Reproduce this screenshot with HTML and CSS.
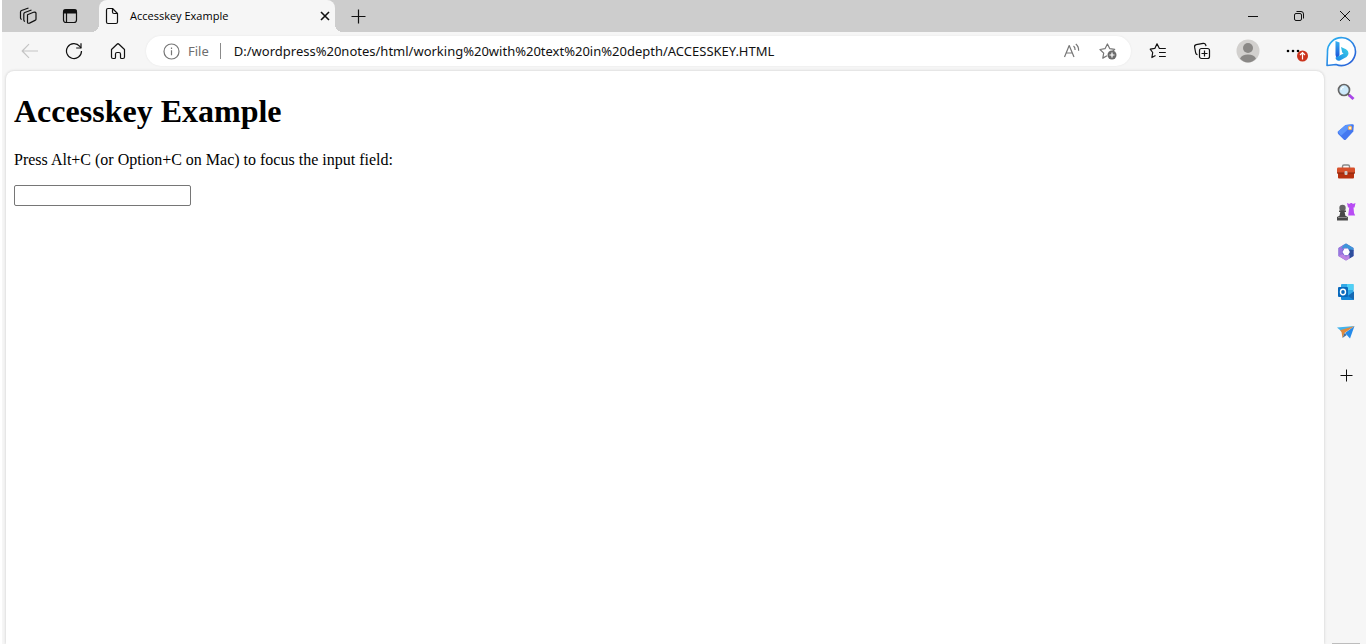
FILE: index.html
```html
<!DOCTYPE html>
<html lang="en">
<head>
  <meta charset="UTF-8">
  <meta name="viewport" content="width=device-width, initial-scale=1.0">
  <title>Accesskey Example</title>
  <link rel="stylesheet" href="styles.css">
</head>
<body>
  <header class="titlebar">
    <button class="title-btn" aria-label="Workspaces">
      <svg width="18" height="18" viewBox="0 0 18 18" class="line"><path d="M8.500 7.700l6-2.500q2-.6 2.500.8v6.200q0 .8-1 1.200l-5.500 2.700q-1.900.6-2-.9z"/><path d="M6 14.500q-1.200-.4-1.200-1.400V7q0-1 1-1.500L12.500 3"/><path d="M2.700 12.500q-1.200-.4-1.200-1.400V5q0-1 1-1.500L9.500 1"/></svg>
    </button>
    <button class="title-btn" aria-label="Tab actions">
      <svg width="16" height="16" viewBox="0 0 16 16" class="line"><rect x="1.500" y="1.500" width="13" height="13" rx="2.500"/><path d="M4.500 4v10" /><path d="M2 2h12v3H2z" fill="#111"/></svg>
    </button>
    <div class="tab">
      <svg width="14" height="18" viewBox="0 0 14 18" class="line"><path d="M3 1.500h4.500l5 5V15q0 1.500-1.500 1.500H3q-1.500 0-1.500-1.500V3Q1.500 1.500 3 1.500z"/><path d="M7.500 1.500V5q0 1.500 1.500 1.500h3.500"/></svg>
      <span class="tab-title">Accesskey Example</span>
      <button class="tab-close" aria-label="Close tab">
        <svg width="10" height="10" viewBox="0 0 10 10" class="line bold"><path d="M1 1l8 8M9 1L1 9"/></svg>
      </button>
    </div>
    <button class="title-btn" aria-label="New tab">
      <svg width="15" height="15" viewBox="0 0 15 15" class="line"><path d="M7.500.5v14M.5 7.500h14"/></svg>
    </button>
    <div class="window-controls">
      <button class="title-btn" aria-label="Minimize">
        <svg width="10" height="10" viewBox="0 0 10 10" class="line thin"><path d="M0 5.500h10"/></svg>
      </button>
      <button class="title-btn" aria-label="Restore">
        <svg width="10" height="10" viewBox="0 0 10 10" class="line thin"><rect x=".5" y="2.500" width="7" height="7" rx="1.500"/><path d="M2.500.5h4.500q2.500 0 2.500 2.500v4.500"/></svg>
      </button>
      <button class="title-btn" aria-label="Close">
        <svg width="10" height="10" viewBox="0 0 10 10" class="line thin"><path d="M0 0l10 10M10 0L0 10"/></svg>
      </button>
    </div>
  </header>

  <nav class="toolbar">
    <button class="tool-btn" aria-label="Back" disabled>
      <svg width="18" height="16" viewBox="0 0 18 16" class="line faded"><path d="M17 8H1.500M8 1.200L1.200 8 8 14.800"/></svg>
    </button>
    <button class="tool-btn" aria-label="Refresh">
      <svg width="18" height="18" viewBox="0 0 18 18" class="line"><path d="M16.500 9A7.500 7.500 0 1 1 14.800 4.300L16 6"/><path d="M16 1.200V6h-4.800"/></svg>
    </button>
    <button class="tool-btn" aria-label="Home">
      <svg width="16" height="18" viewBox="0 0 16 18" class="line"><path d="M1.500 7.500L7 2.200q1-.9 2 0l5.500 5.300V15q0 1.500-1.500 1.500h-1.500q-1 0-1-1V12q0-1.500-1.500-1.500H7q-1.500 0-1.500 1.500v3.500q0 1-1 1H3q-1.500 0-1.500-1.500z"/></svg>
    </button>

    <div class="address-bar">
      <button class="site-info">
        <svg width="17" height="17" viewBox="0 0 17 17" class="line gray"><circle cx="8.500" cy="8.500" r="7.500"/><path d="M8.500 7.300v5M8.500 4.500v1.400"/></svg>
        File
      </button>
      <input class="url" type="text" aria-label="Address" value="D:/wordpress%20notes/html/working%20with%20text%20in%20depth/ACCESSKEY.HTML">
      <button class="bar-btn" aria-label="Read aloud">
        <svg width="18" height="16" viewBox="0 0 18 16" class="line gray"><path d="M1.500 14L6.200 2.500 11 14M3.200 10h6"/><path d="M10.500 3q1.700 1.200 1.600 4M12.800 1q3 2.400 2.800 6.700"/></svg>
      </button>
      <button class="bar-btn" aria-label="Add to favorites">
        <svg width="18" height="18" viewBox="0 0 18 18" class="line gray"><path d="M8 13.800l-4.200 2.300.9-5L1 7.500l5-.8L8.400 2l2.300 4.600 5 .8-2 1.900"/><circle cx="13" cy="13" r="4.500" fill="#6b6b6b" stroke="none"/><path d="M13 10.500v5M10.500 13h5" stroke="#fff"/></svg>
      </button>
    </div>

    <button class="tool-btn" aria-label="Favorites">
      <svg width="18" height="18" viewBox="0 0 18 18" class="line"><path d="M6.500 13.500l-3.600 2 .8-5L1.200 7.200l4.600-.8L8 1.800l2.400 4.700h6.400M10 10.500h6.800M10 14.500h6.800"/></svg>
    </button>
    <button class="tool-btn" aria-label="Collections">
      <svg width="18" height="18" viewBox="0 0 18 18" class="line"><rect x="6.500" y="6.500" width="10" height="10" rx="2"/><path d="M11.500 8.500v6M8.500 11.500h6"/><path d="M4.500 12.700q-1.300-.2-1.800-1.700L1.600 5.200Q1.300 3.200 3.200 2.700l7-1.400q2-.2 2.500 1.500l.3 1.400"/></svg>
    </button>
    <button class="tool-btn wide" aria-label="Profile">
      <svg width="24" height="24" viewBox="0 0 24 24"><circle cx="12" cy="12" r="11.500" fill="#d2d0ce"/><circle cx="12" cy="9" r="5" fill="#8a8886"/><path d="M4 19.500q2-4 8-4t8 4q-3.500 4-8 4t-8-4z" fill="#8a8886"/></svg>
    </button>
    <button class="tool-btn wide" aria-label="Settings and more, update available">
      <svg width="24" height="24" viewBox="0 0 24 24"><circle cx="4" cy="12" r="1.300"/><circle cx="9" cy="12" r="1.300"/><circle cx="14" cy="12" r="1.300"/><circle cx="18.500" cy="17" r="5.500" fill="#cb341d"/><path d="M18.500 20.500v-7M16 16l2.500-2.500L21 16" fill="none" stroke="#fff" stroke-width="1.200"/></svg>
    </button>
    <button class="tool-btn bing" aria-label="Discover">
      <svg width="32" height="32" viewBox="0 0 32 32">
        <defs>
          <linearGradient id="bingRing" x1="0" y1="0" x2="1" y2="1"><stop offset="0" stop-color="#2bb8f3"/><stop offset="1" stop-color="#2a58d5"/></linearGradient>
          <linearGradient id="bingB" x1="0" y1="0" x2="0" y2="1"><stop offset="0" stop-color="#35b4f2"/><stop offset="1" stop-color="#1b50d8"/></linearGradient>
          <linearGradient id="bingBowl" x1="0" y1="1" x2="1" y2="0"><stop offset="0" stop-color="#1a85e8"/><stop offset="1" stop-color="#3cd2e6"/></linearGradient>
        </defs>
        <path d="M2 30.500l.5-13A14 14 0 1 1 11 29.500z" fill="#fff" stroke="url(#bingRing)" stroke-width="1.600" stroke-linejoin="round"/>
        <path d="M10.500 6l4 1.500V20l-2 3q-2-1-2-3z" fill="url(#bingB)"/>
        <path d="M16 12l5 2.300q2.500 1.300 2.500 4 0 2.200-2 3.700L15 25.500q-3 1-4.400-2-.4-1.500 1-1.500l7-3.500-1.400-1z" fill="url(#bingBowl)"/>
      </svg>
    </button>
  </nav>

  <div class="workspace">
    <main class="page">
      <h1>Accesskey Example</h1>
      <p><label for="field">Press Alt+C (or Option+C on Mac) to focus the input field:</label></p>
      <input class="field" type="text" id="field" accesskey="c">
    </main>

    <aside class="sidebar">
      <button class="side-btn" aria-label="Search">
        <svg width="18" height="18" viewBox="0 0 18 18"><path d="M10.500 10.500l2.500 2.500" stroke="#666" stroke-width="2"/><path d="M12 12l4.500 4" stroke="#a846e8" stroke-width="3"/><circle cx="7" cy="7" r="5.500" fill="#cdeafb" stroke="#666" stroke-width="1.700"/><path d="M4 7q.3-3 3-3" stroke="#fff" fill="none"/></svg>
      </button>
      <button class="side-btn" aria-label="Shopping">
        <svg width="18" height="18" viewBox="0 0 18 18"><path d="M1 8.500L8.500 2l7-.8q1.300 0 1.300 1.300l-.5 6L9 16.400q-1.200 1-2.300 0L1.200 11q-1-1.400-.2-2.500z" fill="#4478f0"/><path d="M1 8.500L8.500 2l7-.8-6.500 7-5 4.500z" fill="#5c95fb"/><circle cx="13" cy="5" r="2.200" fill="#f5b35e"/><circle cx="13" cy="5" r="1" fill="#fff"/></svg>
      </button>
      <button class="side-btn" aria-label="Tools">
        <svg width="18" height="18" viewBox="0 0 18 18"><path d="M5.500 5V3.500Q5.500 2 7 2h4q1.500 0 1.500 1.500V5" fill="none" stroke="#888" stroke-width="1.400"/><rect y="4.500" width="18" height="6" rx="1.200" fill="#d7502b"/><path d="M1 10h16v4.500q0 1-1 1H2q-1 0-1-1z" fill="#b7310f"/><path d="M0 10h18" stroke="#842711"/><rect x="7.500" y="8" width="3" height="4" rx="1" fill="#ccc"/></svg>
      </button>
      <button class="side-btn" aria-label="Games">
        <svg width="20" height="18" viewBox="0 0 20 18"><path d="M11 0l1.800.7h1.200L14.500 0h1.500l.5.700h1.200L19.500 0l-1 4.500h-1l.5 5.500 1.200 2.500h-7l1-8h-1.200z" fill="#b84cf4"/><circle cx="6.500" cy="5" r="3.200" fill="#646464"/><path d="M3 7.500h7v1.600H8.600l.8 3.700 2.500 1.200v3.500H1V14l2.500-1.200.8-3.700H3z" fill="#484848"/><path d="M2 14.500h9" stroke="#888"/></svg>
      </button>
      <button class="side-btn" aria-label="Microsoft 365">
        <svg width="18" height="18" viewBox="0 0 18 18"><path d="M9 .5L16.500 5v8L9 17.500 1.500 13V5z" fill="#6c5bce"/><path d="M1.500 5L7 1.500 9 4.500 5.500 7v4l-3 2.500-1-.5z" fill="#9a76df"/><path d="M6 2.500L9 .5 16.500 5v3L12 6.500 8.500 4.500 4.500 6z" fill="#3f96d9"/><path d="M16.500 7v6l-4 2.400-1-4.400 1-4.500z" fill="#2d4e9c"/><path d="M1.500 13l4-2L9 13.500l3.500-1.800v3.700L9 17.500z" fill="#bd84e3"/><path d="M7.500 5.500h3.400l2 3.400-2 3.400H7.500L5.500 9z" fill="#fff"/></svg>
      </button>
      <button class="side-btn" aria-label="Outlook">
        <svg width="18" height="18" viewBox="0 0 18 18"><rect x="4" y="1" width="12.500" height="14" rx="1" fill="#32a9e7"/><path d="M10 1h6.500v6H10z" fill="#50d0f5"/><path d="M4 9.500l7 3 6-4V16q0 1-1 1H5q-1 0-1-1z" fill="#1688d9"/><path d="M11 13l6-4.500V17z" fill="#1668b2"/><rect x="1" y="4" width="10" height="10" rx="1" fill="#0869bd"/><ellipse cx="6" cy="9" rx="2.500" ry="2.700" fill="none" stroke="#fff" stroke-width="1.400"/></svg>
      </button>
      <button class="side-btn" aria-label="Drop">
        <svg width="18" height="18" viewBox="0 0 18 18"><path d="M0 4.500L17.500 3 5 8.800z" fill="#42b3ed"/><path d="M17.500 3L13 15.500 8 10z" fill="#258bea"/><path d="M3 7.300L17.500 3 7.500 10l-2 5-1-6z" fill="#e08a3c"/><path d="M5.500 15l2-5 2.200 2z" fill="#436f9f"/></svg>
      </button>
      <button class="side-btn add" aria-label="Customize sidebar">
        <svg width="13" height="13" viewBox="0 0 13 13" class="line thin"><path d="M6.500.5v12M.5 6.500h12"/></svg>
      </button>
      <hr class="side-divider">
    </aside>
  </div>
</body>
</html>
```
FILE: styles.css
```css
* {
  box-sizing: border-box;
}

body {
  margin: 0;
  padding-left: 2px;
  height: 100vh;
  display: flex;
  flex-direction: column;
  overflow: hidden;
  background: #fff;
  color: #000;
  font-family: "Open Sans", sans-serif;
}

button {
  display: flex;
  align-items: center;
  justify-content: center;
  flex-shrink: 0;
  padding: 0;
  border: none;
  background: none;
  font-family: inherit;
}

svg {
  display: block;
  flex-shrink: 0;
}

.line {
  fill: none;
  stroke: #111;
  stroke-width: 1.2;
  stroke-linejoin: round;
}

.line.thin {
  stroke-width: 1;
}

.line.bold {
  stroke-width: 1.6;
}

.line.gray {
  stroke: #767676;
}

.line.faded {
  stroke: #c4c4c4;
}

/* tab strip */
.titlebar {
  display: flex;
  height: 32px;
  flex-shrink: 0;
  padding-left: 5px;
  background: #cdcdcd;
}

.title-btn {
  width: 42px;
  height: 32px;
}

.tab {
  position: relative;
  display: flex;
  align-items: center;
  width: 236px;
  margin: 0 2px 0 8px;
  padding: 0 5px 0 6px;
  background: #f6f6f6;
  border-radius: 8px 8px 0 0;
}

/* curved feet where the tab meets the toolbar */
.tab::before,
.tab::after {
  content: "";
  position: absolute;
  bottom: 0;
  width: 8px;
  height: 8px;
}

.tab::before {
  right: 100%;
  background: radial-gradient(circle at 0 0, transparent 8px, #f6f6f6 8px);
}

.tab::after {
  left: 100%;
  background: radial-gradient(circle at 100% 0, transparent 8px, #f6f6f6 8px);
}

.tab-title {
  flex: 1;
  margin-left: 11px;
  font-size: 11px;
  line-height: 16px;
  white-space: nowrap;
}

.tab-close {
  width: 10px;
  height: 24px;
}

.window-controls {
  display: flex;
  gap: 4px;
  margin-left: auto;
}

/* toolbar */
.toolbar {
  display: flex;
  align-items: center;
  height: 38px;
  flex-shrink: 0;
  padding: 0 4px 0 6px;
  background: #f6f6f6;
}

.tool-btn {
  width: 44px;
  height: 32px;
}

.tool-btn.wide {
  width: 48px;
}

.tool-btn.bing {
  width: 42px;
}

.address-bar {
  display: flex;
  align-items: center;
  flex: 1;
  min-width: 0;
  height: 30px;
  margin: 0 5px 0 6px;
  padding: 0 5px 0 17px;
  background: #fff;
  border-radius: 15px;
  box-shadow: 0 0 2px #e4e4e4;
  font-family: "Noto Sans", sans-serif;
}

.site-info {
  gap: 8px;
  height: 16px;
  padding-right: 11px;
  border-right: 1px solid #8a8a8a;
  color: #6e6e6e;
  font-size: 13px;
}

.url {
  flex: 1;
  min-width: 0;
  padding: 0 0 0 13px;
  border: none;
  outline: none;
  background: none;
  color: #111;
  font-family: inherit;
  font-size: 13px;
}

.bar-btn {
  width: 36px;
  height: 28px;
}

/* page and sidebar */
.workspace {
  display: flex;
  flex: 1;
  min-height: 0;
  padding-left: 4px;
  background: #f6f6f6;
}

.page {
  flex: 1;
  min-width: 0;
  margin-top: 1px;
  padding: 0 8px;
  overflow: auto;
  background: #fff;
  border-radius: 8px 8px 0 0;
  box-shadow: 0 0 3px #c8c8c8;
  font-family: "Liberation Serif", serif;
  font-size: 16px;
}

.page h1 {
  margin: 22px 0;
  font-size: 32px;
  line-height: 36px;
}

.page p {
  margin: 16px 0;
  line-height: 18px;
}

.field {
  display: block;
  width: 177px;
  height: 21px;
  padding: 1px 2px;
  border: 1px solid #767676;
  border-radius: 2px;
}

.sidebar {
  display: flex;
  flex-direction: column;
  align-items: center;
  width: 42px;
  flex-shrink: 0;
  padding: 2px 0 0 2px;
}

.side-btn {
  width: 40px;
  height: 40px;
}

.side-btn.add {
  margin-top: 3px;
}

.side-divider {
  width: 28px;
  height: 1px;
  margin: auto 0 0;
  border: none;
  background: #bdbdbd;
}
```
